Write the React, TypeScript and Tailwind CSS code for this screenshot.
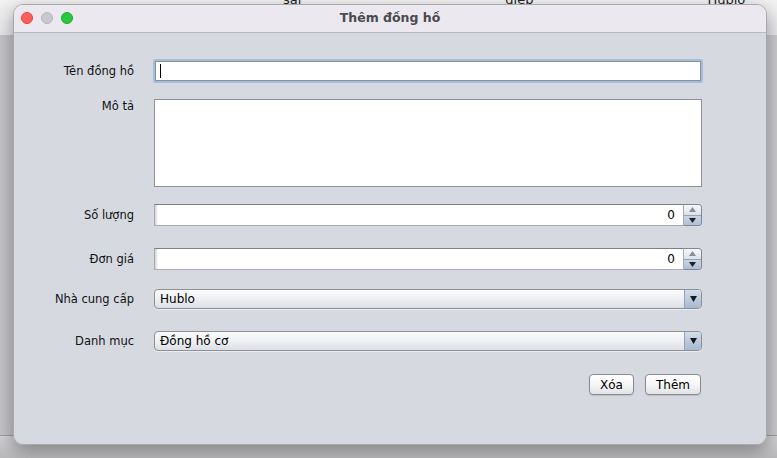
import React from "react";

const font = { fontFamily: '"DejaVu Sans", "Liberation Sans", sans-serif' };

function Spinner() {
  return (
    <div className="flex h-[22px] w-[548px]">
      <div className="flex h-full flex-1 items-center justify-end border border-[#a9abb0] border-t-[#7d7f84] bg-white pr-[8px] text-[12px] text-black shadow-[inset_4px_0_3px_-3px_rgba(0,0,0,0.25)]">
        0
      </div>
      <div className="flex h-full w-[18px] flex-col overflow-hidden rounded-r-[4px] border border-l-0 border-[#7f8792]">
        <div className="flex flex-1 items-center justify-center border-b border-[#9aa3b0] bg-gradient-to-b from-[#f7f8fa] to-[#dde1e8]">
          <svg width="7" height="5" viewBox="0 0 7 5"><path d="M3.5 0L7 5H0z" fill="#8a8d93" /></svg>
        </div>
        <div className="flex flex-1 items-center justify-center bg-gradient-to-b from-[#c9d6e6] to-[#aebfd5]">
          <svg width="7" height="5" viewBox="0 0 7 5"><path d="M0 0h7L3.5 5z" fill="#1e2229" /></svg>
        </div>
      </div>
    </div>
  );
}

function Combo({ value }: { value: string }) {
  return (
    <div className="flex h-[20px] w-[548px] overflow-hidden rounded-[4px] border border-[#8e9096] bg-gradient-to-b from-[#fbfbfc] via-[#eef0f3] to-[#dcdfe5] shadow-[0_1px_0_rgba(255,255,255,0.5)]">
      <div className="flex flex-1 items-center pl-[5px] text-[12px] text-black">{value}</div>
      <div className="flex w-[17px] items-center justify-center border-l border-[#97a3b4] bg-gradient-to-b from-[#d3deeb] via-[#bccbdd] to-[#a7b9d0]">
        <svg width="7" height="6" viewBox="0 0 7 6"><path d="M0 0h7L3.5 6z" fill="#15191f" /></svg>
      </div>
    </div>
  );
}

function Btn({ label, w }: { label: string; w: string }) {
  return (
    <div
      className={`flex h-[21px] ${w} items-center justify-center rounded-[4px] border border-[#8c8c90] bg-gradient-to-b from-[#ffffff] via-[#f6f6f7] to-[#e2e3e6] text-[12px] text-black shadow-[0_1px_1px_rgba(0,0,0,0.12)]`}
    >
      {label}
    </div>
  );
}

function Label({ children }: { children: React.ReactNode }) {
  return (
    <div className="flex w-[120px] items-center justify-end text-[11.5px] text-[#111]">
      <span className="leading-[14px]">{children}</span>
    </div>
  );
}

export default function App() {
  return (
    <div className="relative h-[458px] w-[777px] overflow-hidden bg-[#c6c6ca]" style={font}>
      {/* background main window */}
      <div className="flex h-full flex-col">
        <div className="h-[35px] bg-gradient-to-b from-[#f2f2f3] to-[#e6e6e8]">
          <div className="relative -mt-[10px] flex text-[13px] text-[#222]">
            <span className="ml-[283px]">sai</span>
            <span className="ml-[204px]">diep</span>
            <span className="ml-[174px]">Hublo</span>
          </div>
        </div>
        <div className="flex flex-1">
          <div className="flex-1 bg-gradient-to-r from-[#c3c3c7] to-[#cacacd]" />
        </div>
        <div className="h-[23px] border-t border-[#9c9ca2] bg-gradient-to-b from-[#d2d2d4] to-[#b9b9bc]" />
      </div>

      {/* dialog */}
      <div className="absolute left-[13px] top-[4px] flex h-[441px] w-[754px] flex-col overflow-hidden rounded-[10px] border border-[#a9a9ad] shadow-[0_6px_18px_rgba(0,0,0,0.35)]">
        <div className="relative flex h-[28px] shrink-0 items-center justify-center border-b border-[#b9b9be] bg-[#ebe9ef]">
          <div className="absolute left-[7px] top-[7px] flex gap-[8px]">
            <div className="h-[12px] w-[12px] rounded-full border border-[#e0443e] bg-[#fe5f57]" />
            <div className="h-[12px] w-[12px] rounded-full border border-[#b5b5b9] bg-[#c9c8cd]" />
            <div className="h-[12px] w-[12px] rounded-full border border-[#1aab29] bg-[#28c840]" />
          </div>
          <span className="text-[12.5px] font-bold text-[#4a4a4e]">Thêm đồng hồ</span>
        </div>
        <div className="flex flex-1 flex-col bg-[#d6d9e0] pt-[26px]">
          {/* row 1 */}
          <div className="flex h-[24px] gap-[19px]">
            <Label>Tên đồng hồ</Label>
            <div className="flex h-[24px] w-[550px] items-center rounded-[2px] border-[2px] border-[#a3bfdf] bg-white">
              <div className="flex h-full w-full items-center border border-[#8e9096] pl-[4px]">
                <div className="h-[14px] w-[1px] bg-black" />
              </div>
            </div>
          </div>
          {/* row 2 */}
          <div className="mt-[16px] flex gap-[20px]">
            <div className="flex w-[120px] justify-end text-[11.5px] text-[#111]">
              <span className="leading-[14px]">Mô tả</span>
            </div>
            <div className="h-[88px] w-[548px] border border-[#8f9196] bg-white" />
          </div>
          {/* row 3 */}
          <div className="mt-[17px] flex gap-[20px]">
            <Label>Số lượng</Label>
            <Spinner />
          </div>
          <div className="mt-[22px] flex gap-[20px]">
            <Label>Đơn giá</Label>
            <Spinner />
          </div>
          <div className="mt-[19px] flex gap-[20px]">
            <Label>Nhà cung cấp</Label>
            <Combo value="Hublo" />
          </div>
          <div className="mt-[22px] flex gap-[20px]">
            <Label>Danh mục</Label>
            <Combo value="Đồng hồ cơ" />
          </div>
          <div className="mt-[23px] flex justify-end gap-[11px] pr-[65px]">
            <Btn label="Xóa" w="w-[45px]" />
            <Btn label="Thêm" w="w-[56px]" />
          </div>
        </div>
      </div>
    </div>
  );
}
